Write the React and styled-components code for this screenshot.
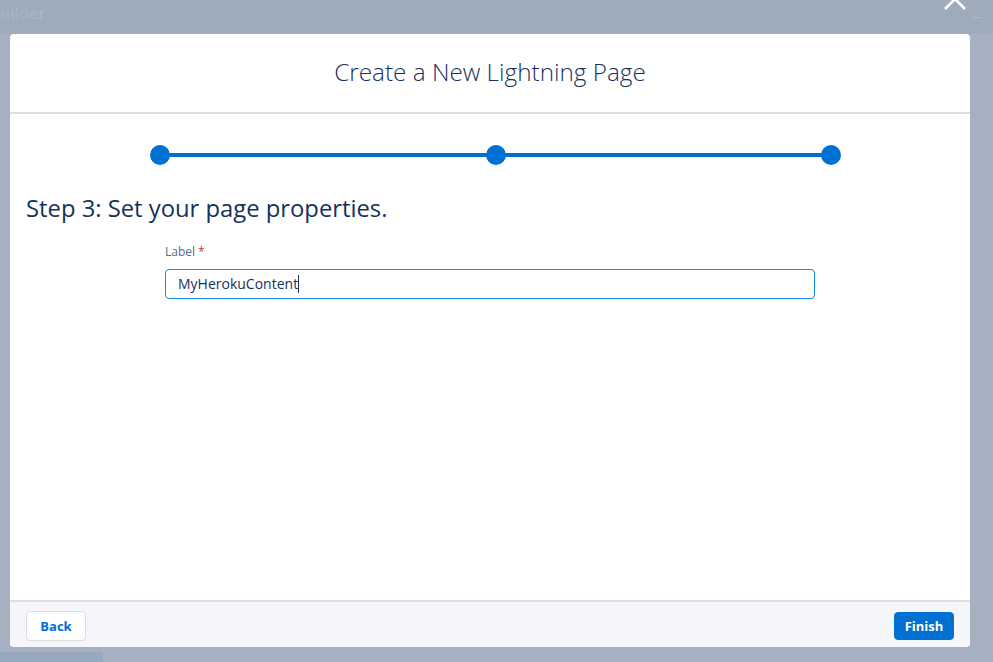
import styled, { createGlobalStyle } from 'styled-components'

const GlobalStyle = createGlobalStyle`
  html, body {
    margin: 0;
    padding: 0;
    background: #a5b1c1;
  }
  body {
    font-family: "Open Sans", "Liberation Sans", sans-serif;
    color: #16325c;
  }
`

const Page = styled.div`
  width: 993px;
  height: 662px;
  display: flex;
  flex-direction: column;
  background: #a5b1c1;
  overflow: hidden;
`

const TopBar = styled.div`
  position: relative;
  height: 34px;
  flex: none;
  background: #9eabbb;
`

const AppName = styled.span`
  position: absolute;
  left: 0;
  top: 2px;
  font-size: 16px;
  color: rgba(255, 255, 255, 0.12);
  font-weight: 600;
`

const CloseIcon = styled.svg`
  position: absolute;
  left: 944px;
  top: -12px;
`

const BackArrow = styled.span`
  position: absolute;
  left: 969px;
  top: 3px;
  font-size: 16px;
  color: rgba(255, 255, 255, 0.22);
`

const Stage = styled.div`
  flex: none;
  padding: 0 23px 0 10px;
`

const Modal = styled.div`
  height: 613px;
  background: #fff;
  border-radius: 4px;
  display: flex;
  flex-direction: column;
  overflow: hidden;
`

const Header = styled.header`
  height: 80px;
  flex: none;
  box-sizing: border-box;
  padding-bottom: 3px;
  display: flex;
  align-items: center;
  justify-content: center;
  border-bottom: 2px solid #d8dde6;
`

const Title = styled.h2`
  margin: 0;
  font-size: 24.3px;
  font-weight: 300;
  color: #16325c;
`

const Body = styled.div`
  flex: 1;
  padding: 0 16px;
`

const Progress = styled.div`
  display: flex;
  align-items: center;
  width: 691px;
  margin: 31px 0 0 124px;
`

const Dot = styled.span`
  width: 20px;
  height: 20px;
  flex: none;
  border-radius: 50%;
  background: #0070d2;
`

const Track = styled.span`
  flex: 1;
  height: 4px;
  background: #0070d2;
  margin: 0 -1px;
`

const StepHeading = styled.h3`
  margin: 29px 0 0;
  font-size: 23.8px;
  line-height: 1.2;
  font-weight: 400;
  color: #16325c;
`

const Field = styled.div`
  width: 650px;
  margin: 21px 0 0 139px;
`

const Label = styled.label`
  display: block;
  font-size: 12px;
  line-height: 16px;
  color: #54698d;
  margin-bottom: 9px;
`

const Required = styled.abbr`
  color: #c23934;
  text-decoration: none;
  margin-left: 3px;
`

const Input = styled.div`
  height: 30px;
  box-sizing: border-box;
  border: 1px solid #1589ee;
  border-radius: 4px;
  padding: 0 12px;
  display: flex;
  align-items: center;
  font-size: 14px;
  color: #16325c;
`

const Caret = styled.span`
  width: 1px;
  height: 18px;
  background: #16325c;
`

const Footer = styled.footer`
  height: 47px;
  flex: none;
  box-sizing: border-box;
  padding: 2px 16px 0;
  display: flex;
  align-items: center;
  justify-content: space-between;
  background: #f4f6f9;
  border-top: 2px solid #d8dde6;
`

const Button = styled.button`
  height: ${({ $primary }) => ($primary ? '28px' : '30px')};
  width: 60px;
  border-radius: 4px;
  font-family: "Open Sans", "Liberation Sans", sans-serif;
  font-size: 13px;
  font-weight: 700;
  cursor: pointer;
  border: 1px solid ${({ $primary }) => ($primary ? '#0070d2' : '#d8dde6')};
  background: ${({ $primary }) => ($primary ? '#0070d2' : '#fff')};
  color: ${({ $primary }) => ($primary ? '#fff' : '#0070d2')};
`

const BottomStrip = styled.div`
  flex: 1;
  display: flex;
  align-items: flex-end;
`

const Tab = styled.span`
  width: 103px;
  height: 10px;
  background: #98a9bf;
`

export default function App() {
  return (
    <>
      <GlobalStyle />
      <Page>
        <TopBar>
          <AppName>uilder</AppName>
          <CloseIcon width="22" height="22" viewBox="0 0 22 22">
            <path d="M1 1 L21 21 M21 1 L1 21" stroke="#fff" strokeWidth="2.6" fill="none" />
          </CloseIcon>
          <BackArrow>←</BackArrow>
        </TopBar>
        <Stage>
          <Modal>
            <Header>
              <Title>Create a New Lightning Page</Title>
            </Header>
            <Body>
              <Progress>
                <Dot />
                <Track />
                <Dot />
                <Track />
                <Dot />
              </Progress>
              <StepHeading>Step 3: Set your page properties.</StepHeading>
              <Field>
                <Label>
                  Label<Required title="required">*</Required>
                </Label>
                <Input>
                  MyHerokuContent
                  <Caret />
                </Input>
              </Field>
            </Body>
            <Footer>
              <Button>Back</Button>
              <Button $primary>Finish</Button>
            </Footer>
          </Modal>
        </Stage>
        <BottomStrip>
          <Tab />
        </BottomStrip>
      </Page>
    </>
  )
}
